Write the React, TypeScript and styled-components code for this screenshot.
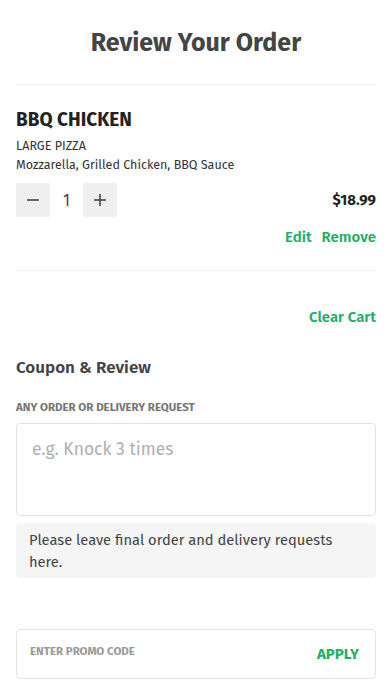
import React from "react";
import styled, { createGlobalStyle } from "styled-components";

const Global = createGlobalStyle`
  html, body { margin: 0; padding: 0; background: #fff; }
  body { font-family: "Fira Sans", Lato, "Noto Sans", sans-serif; -webkit-font-smoothing: antialiased; }
  * { box-sizing: border-box; }
`;

const GREEN = "#1fb06a";

const Page = styled.div`
  width: 392px;
  padding: 0 16px;
  display: flex;
  flex-direction: column;
`;

const Header = styled.header`
  height: 85px;
  display: flex;
  align-items: flex-start;
  justify-content: center;
  padding-top: 28px;
  border-bottom: 1px solid #f0f0f0;
`;

const Title = styled.h1`
  margin: 0;
  font-size: 25px;
  line-height: 30px;
  font-weight: 700;
  color: #444;
`;

const Item = styled.section`
  padding: 23px 0 23px;
  border-bottom: 1px solid #f0f0f0;
  display: flex;
  flex-direction: column;
`;

const ItemName = styled.h2`
  margin: 0;
  font-size: 19px;
  line-height: 24px;
  font-weight: 700;
  color: #222;
`;

const Meta = styled.div<{ $gap?: number }>`
  font-size: 12.5px;
  line-height: 19px;
  color: #333;
  margin-top: ${(p) => p.$gap ?? 0}px;
`;

const QtyRow = styled.div`
  display: flex;
  align-items: center;
  justify-content: space-between;
  margin-top: 9px;
`;

const Stepper = styled.div`
  display: flex;
  align-items: center;
`;

const StepButton = styled.button`
  width: 34px;
  height: 34px;
  border: none;
  border-radius: 2px;
  background: #efefef;
  display: flex;
  align-items: center;
  justify-content: center;
  padding: 0;
  color: #444;
`;

const Qty = styled.span`
  width: 33px;
  text-align: center;
  font-size: 16px;
  color: #444;
`;

const Price = styled.span`
  font-size: 15px;
  font-weight: 700;
  color: #222;
`;

const Actions = styled.div`
  display: flex;
  justify-content: flex-end;
  gap: 10px;
  margin-top: 10px;
`;

const LinkButton = styled.button`
  border: none;
  background: none;
  padding: 0;
  font-family: inherit;
  font-size: 15px;
  line-height: 20px;
  font-weight: 600;
  color: ${GREEN};
`;

const ClearRow = styled.div`
  display: flex;
  justify-content: flex-end;
  padding-top: 36px;
`;

const SectionTitle = styled.h3`
  margin: 30px 0 0;
  font-size: 17px;
  line-height: 22px;
  font-weight: 600;
  color: #444;
`;

const FieldLabel = styled.div`
  margin-top: 21px;
  font-size: 11.5px;
  line-height: 14px;
  font-weight: 700;
  color: #777;
`;

const TextArea = styled.textarea`
  margin-top: 9px;
  width: 100%;
  height: 93px;
  border: 1px solid #e3e3e3;
  border-radius: 4px;
  padding: 15px 15px;
  font-family: inherit;
  font-size: 17.5px;
  line-height: 22px;
  color: #333;
  resize: none;
  outline: none;
  &::placeholder { color: #b0b0b0; }
`;

const Note = styled.div`
  margin-top: 7px;
  background: #f5f5f5;
  border-radius: 4px;
  padding: 6px 13px 5px;
  font-size: 14.7px;
  line-height: 22px;
  color: #444;
`;

const PromoBox = styled.div`
  margin-top: 51px;
  height: 50px;
  border: 1px solid #e3e3e3;
  border-radius: 4px;
  display: flex;
  align-items: center;
  justify-content: space-between;
  padding: 0 16px 0 13px;
`;

const PromoInput = styled.input`
  border: none;
  outline: none;
  flex: 1;
  padding: 0;
  font-family: inherit;
  font-size: 11.5px;
  font-weight: 700;
  color: #333;
  align-self: flex-start;
  margin-top: 14px;
  &::placeholder { color: #9a9a9a; }
`;

const Apply = styled(LinkButton)`
  font-weight: 700;
  font-size: 15px;
`;

const Icon = ({ plus }: { plus?: boolean }) => (
  <svg width="14" height="14" viewBox="0 0 14 14">
    <path d="M1 7h12" stroke="#444" strokeWidth="1.6" />
    {plus && <path d="M7 1v12" stroke="#444" strokeWidth="1.6" />}
  </svg>
);

export default function App() {
  return (
    <Page>
      <Global />
      <Header>
        <Title>Review Your Order</Title>
      </Header>
      <Item>
        <ItemName>BBQ CHICKEN</ItemName>
        <Meta $gap={4}>LARGE PIZZA</Meta>
        <Meta>Mozzarella, Grilled Chicken, BBQ Sauce</Meta>
        <QtyRow>
          <Stepper>
            <StepButton aria-label="decrease"><Icon /></StepButton>
            <Qty>1</Qty>
            <StepButton aria-label="increase"><Icon plus /></StepButton>
          </Stepper>
          <Price>$18.99</Price>
        </QtyRow>
        <Actions>
          <LinkButton>Edit</LinkButton>
          <LinkButton>Remove</LinkButton>
        </Actions>
      </Item>
      <ClearRow>
        <LinkButton>Clear Cart</LinkButton>
      </ClearRow>
      <SectionTitle>Coupon &amp; Review</SectionTitle>
      <FieldLabel>ANY ORDER OR DELIVERY REQUEST</FieldLabel>
      <TextArea placeholder="e.g. Knock 3 times" />
      <Note>Please leave final order and delivery requests here.</Note>
      <PromoBox>
        <PromoInput placeholder="ENTER PROMO CODE" />
        <Apply>APPLY</Apply>
      </PromoBox>
    </Page>
  );
}
